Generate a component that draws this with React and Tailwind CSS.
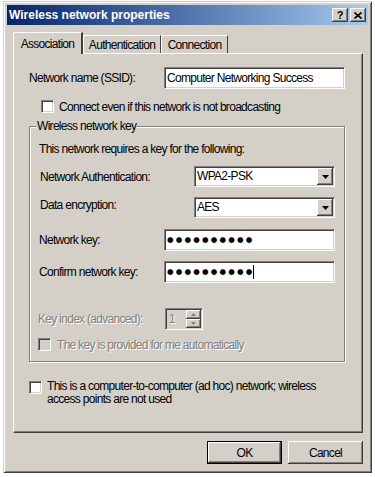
const raised =
  "shadow-[inset_-1px_-1px_0_#404040,inset_1px_1px_0_#ffffff,inset_-2px_-2px_0_#808080,inset_2px_2px_0_#d4d0c8]";
const sunken =
  "border border-t-[#808080] border-l-[#808080] border-b-white border-r-white shadow-[inset_1px_1px_0_#404040,inset_-1px_-1px_0_#d4d0c8]";
const disabledText = "text-[#808080] [text-shadow:1px_1px_0_#ffffff]";

function Checkbox({ disabled }) {
  return (
    <div
      className={`w-[13px] h-[13px] shrink-0 ${sunken} ${disabled ? "bg-[#d4d0c8]" : "bg-white"}`}
    />
  );
}

function Select({ value }) {
  return (
    <div className={`flex items-center w-[141px] h-[21px] bg-white ${sunken} p-[1px]`}>
      <span className="flex-1 pl-[1px] leading-[17px]">{value}</span>
      <div className={`w-[16px] h-[17px] bg-[#d4d0c8] flex items-center justify-center ${raised}`}>
        <svg width="7" height="4" viewBox="0 0 7 4">
          <path d="M0 0h7L3.5 4z" fill="#000" />
        </svg>
      </div>
    </div>
  );
}

function PasswordField({ caret }) {
  return (
    <div className={`flex items-center w-[171px] h-[22px] bg-white ${sunken} pl-[2px]`}>
      <span className="font-['DejaVu_Sans',sans-serif] text-[7.5px] tracking-[2.2px] leading-[10px]">
        ●●●●●●●●●●
      </span>
      {caret && <div className="w-[1px] h-[14px] bg-black -ml-[1px]" />}
    </div>
  );
}

function SpinArrow({ up }) {
  return (
    <svg width="5" height="3" viewBox="0 0 5 3">
      <path d={up ? "M2.5 0L5 3H0z" : "M0 0h5L2.5 3z"} fill="#808080" />
    </svg>
  );
}

export default function App() {
  return (
    <div className="w-[375px] h-[477px] bg-white overflow-hidden font-['Liberation_Sans',Arial,sans-serif] text-[12px] tracking-[-0.7px] text-black">
      {/* window */}
      <div className="ml-[3px] mt-[1px] w-[369px] h-[472px] bg-[#d4d0c8] p-[4px] shadow-[inset_1px_1px_0_#d4d0c8,inset_-1px_-1px_0_#404040,inset_2px_2px_0_#ffffff,inset_-2px_-2px_0_#808080]">
        {/* title bar */}
        <div className="flex items-center h-[20px] bg-linear-to-r from-[#0a246a] to-[#a6caf0] pl-[2px] pr-[2px]">
          <span className="flex-1 text-white font-bold text-[12px] tracking-[0px]">
            Wireless network properties
          </span>
          <div className={`w-[16px] h-[14px] bg-[#d4d0c8] flex items-center justify-center font-bold text-[11px] leading-none tracking-[0px] ${raised}`}>
            ?
          </div>
          <div className={`ml-[2px] w-[16px] h-[14px] bg-[#d4d0c8] flex items-center justify-center ${raised}`}>
            <svg width="8" height="7" viewBox="0 0 8 7">
              <path d="M0.5 0.5l7 6M7.5 0.5l-7 6" stroke="#000" strokeWidth="1.6" />
            </svg>
          </div>
        </div>

        {/* tabs */}
        <div className="flex items-end ml-[6px] mt-[7px] h-[21px] relative z-10">
          <div className="w-[70px] h-[22px] -mb-[1px] bg-[#d4d0c8] border-t border-l border-white border-r-[2px] border-r-[#404040] rounded-tl-[2px] flex items-center justify-center">
            Association
          </div>
          <div className="w-[78px] h-[18px] bg-[#d4d0c8] border-t border-l border-white border-r border-r-[#404040] rounded-tl-[2px] flex items-center justify-center">
            Authentication
          </div>
          <div className="w-[67px] h-[18px] bg-[#d4d0c8] border-t border-l border-white border-r border-r-[#404040] rounded-tl-[2px] flex items-center justify-center">
            Connection
          </div>
        </div>

        {/* tab panel */}
        <div className="ml-[6px] w-[350px] h-[380px] border border-t-white border-l-white border-r-[#404040] border-b-[#404040] shadow-[inset_-1px_-1px_0_#808080]">
          <div className="flex items-center mt-[13px] pl-[15px]">
            <span className="w-[135px]">Network name (SSID):</span>
            <div className={`w-[181px] h-[22px] bg-white ${sunken} flex items-center pl-[2px] leading-[16px]`}>
              Computer Networking Success
            </div>
          </div>

          <div className="flex items-center mt-[11px] pl-[27px] gap-[5px] h-[13px]">
            <Checkbox />
            <span>Connect even if this network is not broadcasting</span>
          </div>

          {/* group box */}
          <div className="relative ml-[15px] mt-[13px] w-[316px] h-[236px] border border-[#808080] shadow-[1px_1px_0_#ffffff,inset_1px_1px_0_#ffffff]">
            <span className="absolute -top-[8px] left-[6px] px-[1px] bg-[#d4d0c8] leading-[14px]">
              Wireless network key
            </span>

            <div className="mt-[15px] pl-[9px] leading-[14px]">
              This network requires a key for the following:
            </div>

            <div className="flex items-center mt-[10px] pl-[10px]">
              <span className="w-[154px]">Network Authentication:</span>
              <Select value="WPA2-PSK" />
            </div>

            <div className="flex items-center mt-[10px] pl-[10px]">
              <span className="w-[154px] -mt-[6px]">Data encryption:</span>
              <Select value="AES" />
            </div>

            <div className="flex items-center mt-[11px] pl-[9px]">
              <span className="w-[125px]">Network key:</span>
              <PasswordField />
            </div>

            <div className="flex items-center mt-[10px] pl-[9px]">
              <span className="w-[125px]">Confirm network key:</span>
              <PasswordField caret />
            </div>

            <div className="flex items-center mt-[25px] pl-[8px]">
              <span className={`w-[127px] ${disabledText}`}>Key index (advanced):</span>
              <div className={`flex items-center w-[38px] h-[22px] bg-[#d4d0c8] ${sunken} p-[1px]`}>
                <span className={`flex-1 pl-[2px] ${disabledText}`}>1</span>
                <div className="flex flex-col w-[15px] h-[18px]">
                  <div className={`h-[9px] flex items-center justify-center ${raised}`}>
                    <SpinArrow up />
                  </div>
                  <div className={`h-[9px] flex items-center justify-center ${raised}`}>
                    <SpinArrow />
                  </div>
                </div>
              </div>
            </div>

            <div className="flex items-center mt-[8px] pl-[8px] gap-[6px] h-[13px]">
              <Checkbox disabled />
              <span className={disabledText}>The key is provided for me automatically</span>
            </div>
          </div>

          <div className="flex items-start mt-[18px] pl-[15px] gap-[5px]">
            <div className="mt-[1px]">
              <Checkbox />
            </div>
            <span className="leading-[13px] w-[300px]">
              This is a computer-to-computer (ad hoc) network; wireless access points are not used
            </span>
          </div>
        </div>

        {/* buttons */}
        <div className="flex justify-end gap-[6px] mt-[8px] pr-[5px]">
          <div className="w-[75px] h-[23px] border border-black">
            <div className={`w-full h-full flex items-center justify-center ${raised}`}>OK</div>
          </div>
          <div className={`w-[75px] h-[23px] flex items-center justify-center ${raised}`}>Cancel</div>
        </div>
      </div>
    </div>
  );
}
